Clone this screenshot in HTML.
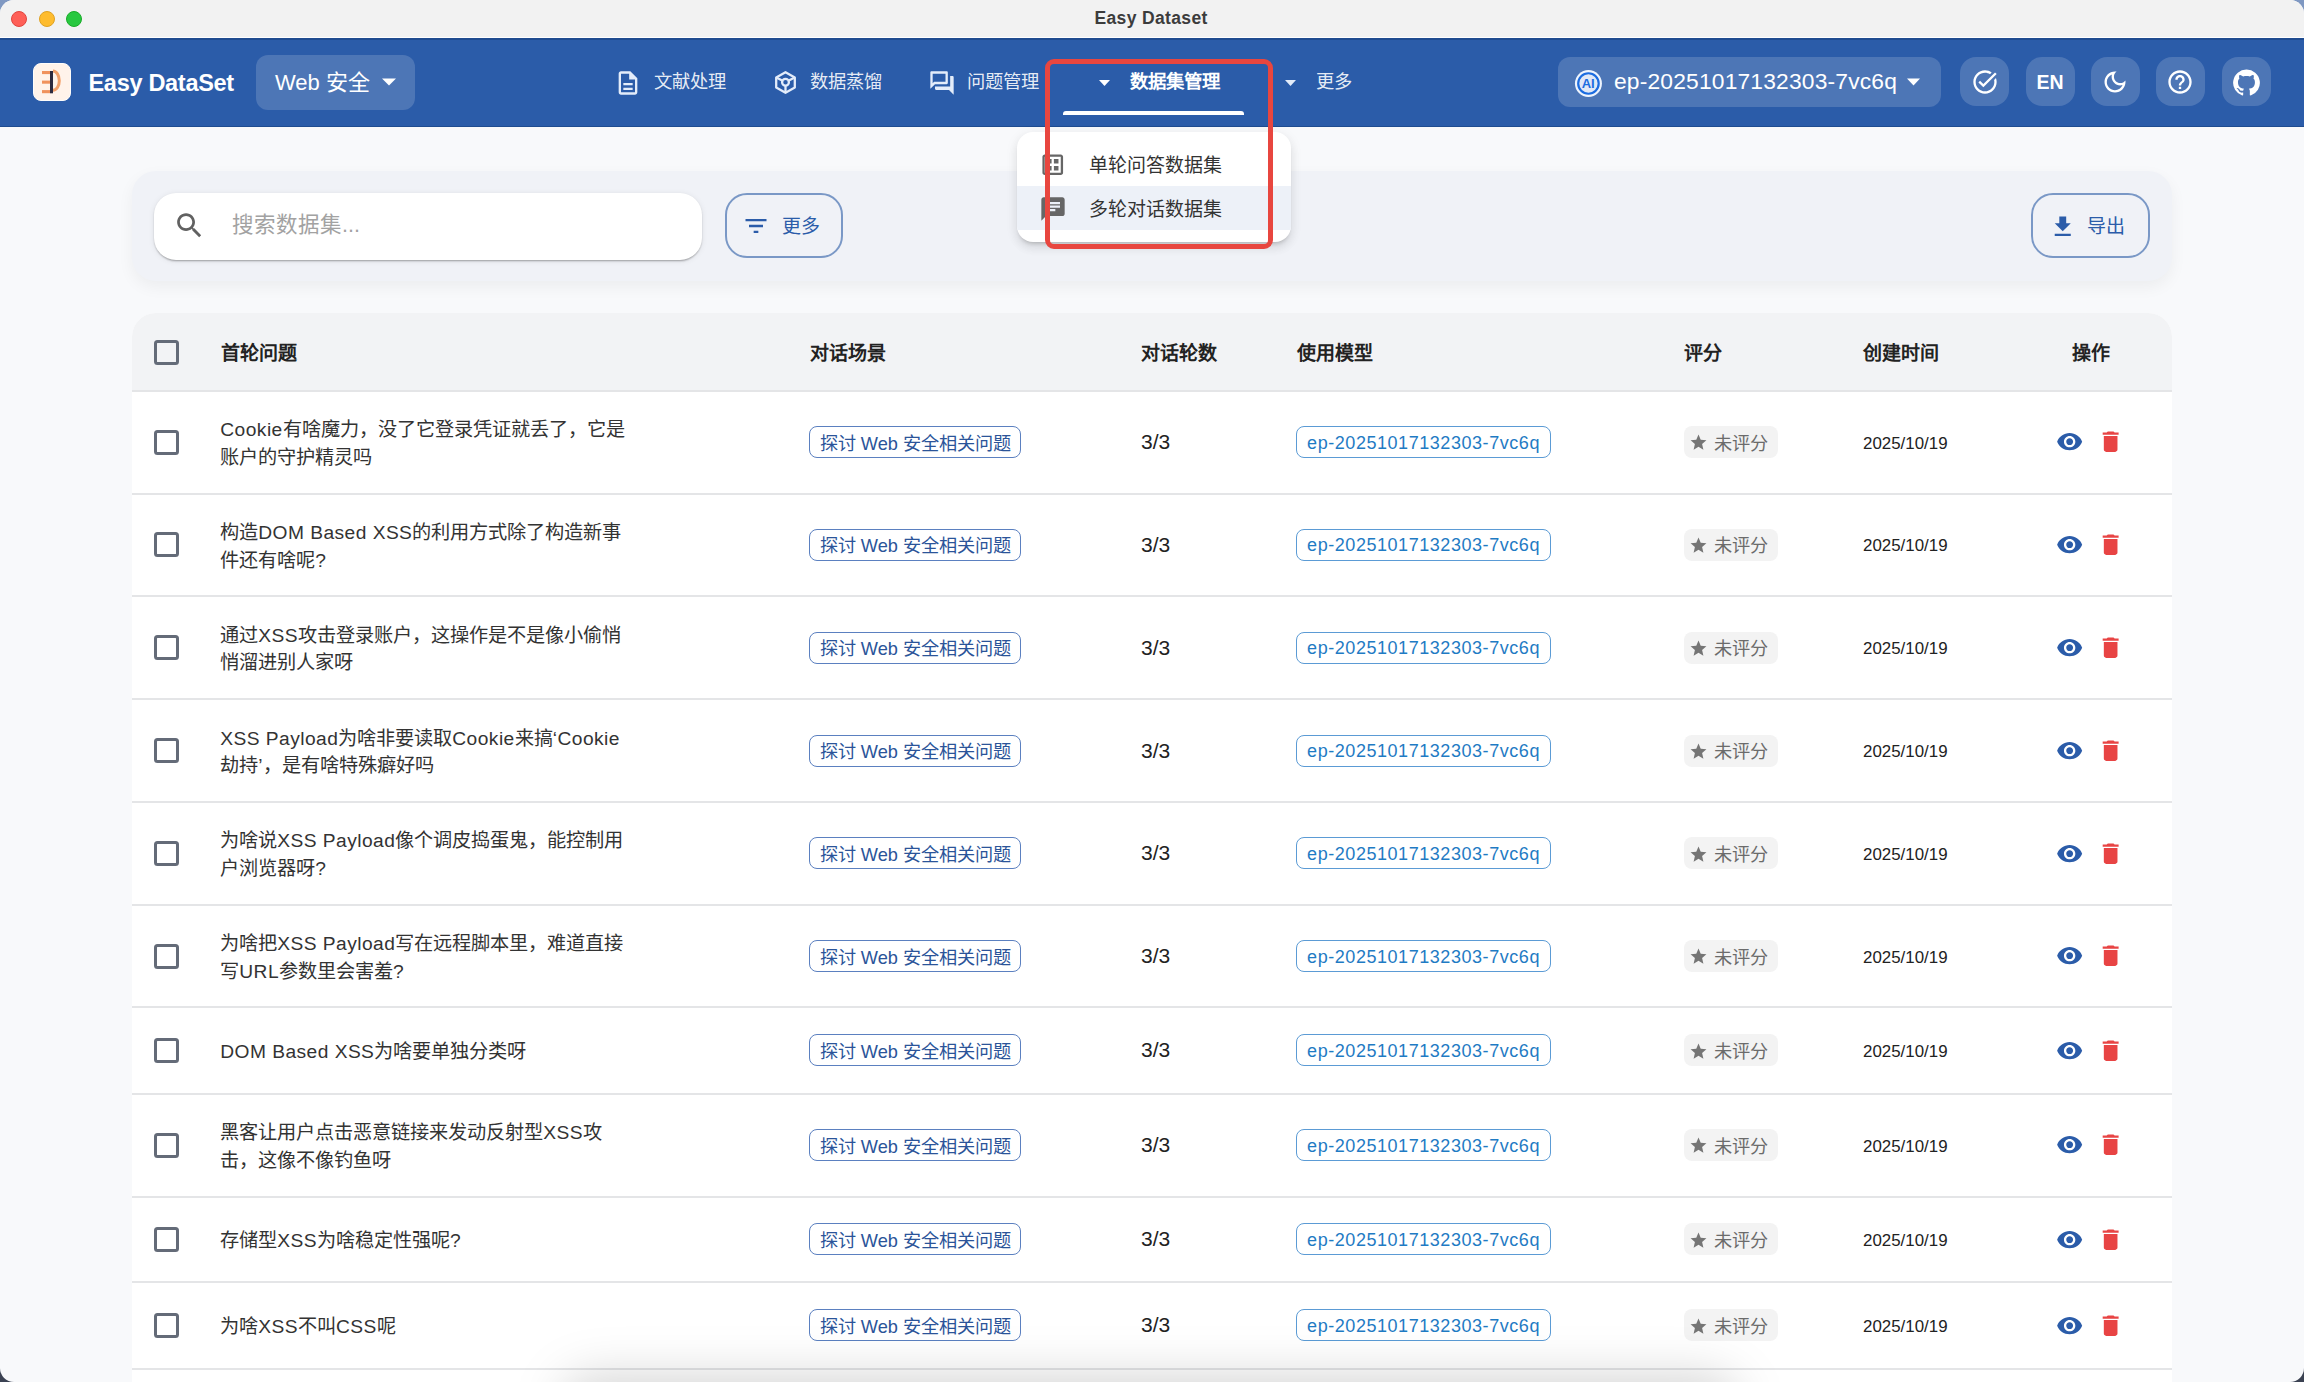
<!DOCTYPE html>
<html lang="zh-CN">
<head>
<meta charset="utf-8">
<style>
*{box-sizing:border-box;margin:0;padding:0}
html,body{width:2304px;height:1382px;overflow:hidden;background:linear-gradient(#7f98c2 0,#7f98c2 60px,#3b4252 1300px)}
body{font-family:"Liberation Sans",sans-serif;position:relative}
.win{position:absolute;left:0;top:0;width:2304px;height:1382px;background:#f8f9fb;border-radius:14px;overflow:hidden}
.abs{position:absolute}
.t{position:absolute;white-space:nowrap;line-height:1}
/* title bar */
.titlebar{position:absolute;left:0;top:0;width:2304px;height:38px;background:#f2f2f2;border-bottom:1px solid #fff}
.tl{position:absolute;top:11px;width:16px;height:16px;border-radius:50%}
/* nav */
.nav{position:absolute;left:0;top:38px;width:2304px;height:89px;background:#2b5ca9}
.pill{position:absolute;background:rgba(255,255,255,0.16);border-radius:12px}
.navt{color:rgba(255,255,255,0.9);font-size:18.3px}
.tri{position:absolute;width:0;height:0;border-left:7px solid transparent;border-right:7px solid transparent;border-top:7px solid #fff}
.tri.s{border-left-width:5.5px;border-right-width:5.5px;border-top-width:6px}
.ibtn{position:absolute;top:57px;width:49px;height:49px;border-radius:16px;background:rgba(255,255,255,0.16)}
/* panel */
.panel{position:absolute;left:132px;top:171px;width:2040px;height:110px;background:#f0f2f7;border-radius:24px;box-shadow:0 6px 16px rgba(0,0,0,0.05)}
.obtn{position:absolute;border:2px solid #7a98c6;border-radius:22px}
/* table */
.th{position:absolute;font-size:19px;font-weight:bold;color:#222;line-height:20px;white-space:nowrap}
.cb{position:absolute;width:25px;height:25px;border:3px solid #646b78;border-radius:3.5px}
.q{position:absolute;font-size:19.2px;line-height:27.7px;color:#333;white-space:nowrap}
.l{letter-spacing:0.45px}
.chip{position:absolute;height:32px;border-radius:8px;white-space:nowrap;line-height:28px}
.c1{border:1.6px solid #5b80c0;color:#2b5499;font-size:18.2px;font-weight:500;padding-left:10px;padding-top:2.5px}
.c2{border:1.6px solid #5b9bd5;color:#1f7bc4;font-size:18px;padding-left:10px;letter-spacing:0.55px;padding-top:1.5px}
.c3{background:#f3f3f3;color:#6b6b6b;font-size:18.2px;padding-left:30px;padding-top:3.5px}
.rt{font-size:21px;color:#222}
.dt{font-size:16.9px;color:#222}
</style>
</head>
<body>
<div class="win">
  <div class="titlebar">
    <div class="tl" style="left:11px;background:#fe5f57;border:1px solid #e0443e"></div>
    <div class="tl" style="left:38.5px;background:#febc2e;border:1px solid #dea123"></div>
    <div class="tl" style="left:66px;background:#28c840;border:1px solid #1aab29"></div>
    <div class="t" style="left:1094.5px;top:9.8px;font-size:17.5px;font-weight:bold;color:#3c3c3c;letter-spacing:0.35px">Easy Dataset</div>
  </div>
  <div class="nav"><div class="abs" style="left:0;top:0;width:2304px;height:1.5px;background:#1f4c90"></div><div class="abs" style="left:0;top:87.8px;width:2304px;height:1.2px;background:#1f4c90"></div>
    <div class="abs" style="left:33px;top:25px;width:38.3px;height:38.3px;border-radius:8px;background:#fff3ea;border:1.5px solid #fffdfb">
      <svg width="38" height="38" viewBox="0 0 38 38" style="position:absolute;left:-1.5px;top:-1.5px">
        <rect x="9" y="8" width="8" height="3.1" fill="#f0925c"/>
        <rect x="9" y="17.6" width="8" height="3.1" fill="#f0925c"/>
        <rect x="9" y="27.1" width="8" height="3.1" fill="#f0925c"/>
        <path d="M20 8.1 A6.3 9.6 0 0 1 20 27.3" fill="none" stroke="#f2a06a" stroke-width="3"/>
        <rect x="17" y="8" width="3" height="22.3" fill="#2d2a3e"/>
      </svg>
    </div>
    <div class="t" style="left:88.5px;top:34px;font-size:23.5px;font-weight:bold;color:#fff;letter-spacing:-0.3px">Easy DataSet</div>
    <div class="pill" style="left:256px;top:17px;width:159px;height:54.5px"></div>
    <div class="t" style="left:275px;top:34px;font-size:22px;color:#fff">Web 安全</div>
    <svg class="abs" style="left:382px;top:40px" width="14" height="8" viewBox="0 0 14 8"><path d="M0 0.5h14L7 7.5z" fill="#fff"/></svg>

    <svg class="abs" style="left:614.3px;top:30.5px" width="28" height="28" viewBox="0 0 24 24"><path fill="#e3ecfa" d="M8 16h8v2H8zm0-4h8v2H8zm6-10H6c-1.1 0-2 .9-2 2v16c0 1.1.89 2 1.99 2H18c1.1 0 2-.9 2-2V8zm4 18H6V4h7v5h5z"/></svg>
    <div class="t navt" style="left:654px;top:35px">文献处理</div>
    <svg class="abs" style="left:772px;top:30.5px" width="26" height="26" viewBox="0 0 26 26"><g fill="none" stroke="#e3ecfa" stroke-width="2.3" stroke-linejoin="round"><path d="M13.5 3.2 L22.8 8.4 V18.6 L13.5 23.8 L4.2 18.6 V8.4 Z"/><circle cx="13.5" cy="13.2" r="3.4"/><path d="M4.8 8.8 L10.6 11.8 M22.2 8.8 L16.4 11.8 M13.5 16.6 V23.5"/></g></svg>
    <div class="t navt" style="left:810px;top:35px">数据蒸馏</div>
    <svg class="abs" style="left:927.7px;top:30.5px" width="28" height="28" viewBox="0 0 24 24"><path fill="#e3ecfa" d="M15 4v7H5.17l-.59.59-.58.58V4zm1-2H3c-.55 0-1 .45-1 1v14l4-4h10c.55 0 1-.45 1-1V3c0-.55-.45-1-1-1m5 4h-2v9H6v2c0 .55.45 1 1 1h11l4 4V7c0-.55-.45-1-1-1"/></svg>
    <div class="t navt" style="left:967px;top:35px">问题管理</div>
    <svg class="abs" style="left:1098.5px;top:42px" width="11" height="6" viewBox="0 0 11 6"><path d="M0 0h11L5.5 6z" fill="#fff"/></svg>
    <div class="t" style="left:1129.5px;top:35px;font-size:18.4px;font-weight:bold;color:#fff">数据集管理</div>
    <div class="abs" style="left:1063px;top:73px;width:181px;height:4px;background:#fff;border-radius:3px 3px 0 0"></div>
    <svg class="abs" style="left:1285px;top:42px" width="11" height="6" viewBox="0 0 11 6"><path d="M0 0h11L5.5 6z" fill="#e3ecfa"/></svg>
    <div class="t navt" style="left:1316px;top:35px">更多</div>

    <div class="pill" style="left:1558px;top:19px;width:383px;height:50px"></div>
    <svg class="abs" style="left:1574px;top:31px" width="29" height="29" viewBox="0 0 29 29"><circle cx="14.45" cy="14.5" r="13.5" fill="#eef4fd"/><circle cx="14.45" cy="14.5" r="10.25" fill="#e0e8f6" stroke="#1b6ce0" stroke-width="2.2"/><text x="14.2" y="19.3" text-anchor="middle" font-family="Liberation Sans" font-weight="bold" font-size="13" fill="#1b6ce0">AI</text></svg>
    <div class="t" style="left:1614px;top:32.3px;font-size:22.8px;color:#fff;letter-spacing:0.18px">ep-20251017132303-7vc6q</div>
    <svg class="abs" style="left:1906.5px;top:40px" width="13" height="8" viewBox="0 0 13 8"><path d="M0 0.5h13L6.5 7.5z" fill="#fff"/></svg>

    <div class="ibtn" style="left:1960px;top:19px"></div>
    <div class="ibtn" style="left:2025.5px;top:19px"></div>
    <div class="ibtn" style="left:2090.5px;top:19px"></div>
    <div class="ibtn" style="left:2156px;top:19px"></div>
    <div class="ibtn" style="left:2221.5px;top:19px"></div>
    <svg class="abs" style="left:1970.5px;top:29.5px" width="28" height="28" viewBox="0 0 24 24"><path fill="#fff" d="M22 5.18 10.59 16.6l-4.24-4.24 1.41-1.41 2.83 2.83 10-10zm-2.21 5.04c.13.57.21 1.17.21 1.78 0 4.42-3.58 8-8 8s-8-3.58-8-8 3.58-8 8-8c1.58 0 3.04.46 4.28 1.25l1.44-1.44C16.1 2.67 14.13 2 12 2 6.48 2 2 6.48 2 12s4.48 10 10 10 10-4.48 10-10c0-1.19-.22-2.33-.6-3.39z"/></svg>
    <div class="t" style="left:2036.5px;top:35px;font-size:19.5px;font-weight:bold;color:#fff">EN</div>
    <svg class="abs" style="left:2101px;top:29.5px" width="28" height="28" viewBox="0 0 24 24"><path fill="#fff" d="M9.37 5.51c-.18.64-.27 1.31-.27 1.99 0 4.08 3.32 7.4 7.4 7.4.68 0 1.35-.09 1.99-.27C17.45 17.19 14.93 19 12 19c-3.86 0-7-3.14-7-7 0-2.93 1.81-5.45 4.37-6.49M12 3c-4.97 0-9 4.03-9 9s4.03 9 9 9 9-4.03 9-9c0-.46-.04-.92-.1-1.36-.98 1.37-2.58 2.26-4.4 2.26-2.98 0-5.4-2.42-5.4-5.4 0-1.81.89-3.42 2.26-4.4-.44-.06-.9-.1-1.36-.1"/></svg>
    <svg class="abs" style="left:2166px;top:29.5px" width="28" height="28" viewBox="0 0 24 24"><path fill="#fff" d="M11 18h2v-2h-2zm1-16C6.48 2 2 6.48 2 12s4.48 10 10 10 10-4.48 10-10S17.52 2 12 2m0 18c-4.41 0-8-3.59-8-8s3.59-8 8-8 8 3.59 8 8-3.59 8-8 8m0-14c-2.21 0-4 1.79-4 4h2c0-1.1.9-2 2-2s2 .9 2 2c0 2-3 1.75-3 5h2c0-2.25 3-2.5 3-5 0-2.210-1.79-4-4-4"/></svg>
    <svg class="abs" style="left:2232px;top:29.5px" width="29" height="29" viewBox="0 0 24 24"><path fill="#fff" d="M12 1.27a11 11 0 00-3.48 21.46c.55.09.73-.28.73-.55v-1.84c-3.03.64-3.67-1.46-3.670-1.46-.55-1.29-1.28-1.65-1.28-1.65-.92-.65.1-.65.1-.65 1.1 0 1.73 1.1 1.73 1.1.92 1.65 2.570 1.2 3.21.92a2 2 0 01.64-1.47c-2.47-.27-5.04-1.19-5.04-5.5 0-1.1.46-2.1 1.2-2.84a3.76 3.76 0 010-2.93s.91-.28 3.11 1.1c1.8-.49 3.7-.49 5.5 0 2.1-1.38 3.02-1.1 3.02-1.1a3.76 3.76 0 010 2.930c.83.74 1.2 1.74 1.2 2.94 0 4.21-2.57 5.13-5.04 5.4.45.37.82.92.82 2.02v3.03c0 .27.1.64.73.55A11 11 0 0012 1.27"/></svg>
  </div>












  <div class="panel"></div>
  <div class="abs" style="left:154px;top:193.2px;width:548px;height:66.4px;background:#fff;border-radius:22px;box-shadow:0 2px 2px -1px rgba(0,0,0,0.22),0 1px 2px 0 rgba(0,0,0,0.12),0 1px 6px 0 rgba(0,0,0,0.08)"></div>
  <svg class="abs" style="left:173.2px;top:209.3px" width="33" height="33" viewBox="0 0 24 24"><path fill="#616161" d="M15.5 14h-.79l-.28-.27C15.41 12.59 16 11.11 16 9.5 16 5.91 13.09 3 9.5 3S3 5.91 3 9.5 5.91 16 9.5 16c1.61 0 3.09-.59 4.23-1.57l.27.28v.79l5 4.99L20.49 19zm-6 0C7.01 14 5 11.99 5 9.5S7.01 5 9.5 5 14 7.01 14 9.5 11.99 14 9.5 14"/></svg>
  <div class="t" style="left:232px;top:215px;font-size:21.5px;color:#a2a2a2">搜索数据集...</div>
  <div class="obtn" style="left:724.6px;top:193.4px;width:118.4px;height:65px"></div>
  <svg class="abs" style="left:742.3px;top:211.9px" width="28" height="28" viewBox="0 0 24 24"><path fill="#2b5ca9" d="M10 18h4v-2h-4zM3 6v2h18V6zm3 7h12v-2H6z"/></svg>
  <div class="t" style="left:782.3px;top:217px;font-size:19px;font-weight:500;color:#2b5ca9">更多</div>
  <div class="obtn" style="left:2030.7px;top:193.2px;width:119px;height:65.2px"></div>
  <svg class="abs" style="left:2048.8px;top:212.6px" width="27.5" height="27.5" viewBox="0 0 24 24"><path fill="#2b5ca9" d="M5 20h14v-2H5zM19 9h-4V3H9v6H5l7 7z"/></svg>
  <div class="t" style="left:2087px;top:217px;font-size:19px;font-weight:500;color:#2b5ca9">导出</div>
<div class="abs" style="left:132px;top:313px;width:2040px;height:1100px;background:#fff;border-radius:24px 24px 0 0;overflow:hidden">
<div class="abs" style="left:0;top:0;width:2040px;height:76.60px;background:#f2f3f5"></div>
</div>
<div class="abs" style="left:132px;top:389.60px;width:2040px;height:2px;background:#e4e5e7"></div>
<div class="abs" style="left:132px;top:492.50px;width:2040px;height:2px;background:#e4e5e7"></div>
<div class="abs" style="left:132px;top:595.30px;width:2040px;height:2px;background:#e4e5e7"></div>
<div class="abs" style="left:132px;top:698.10px;width:2040px;height:2px;background:#e4e5e7"></div>
<div class="abs" style="left:132px;top:800.90px;width:2040px;height:2px;background:#e4e5e7"></div>
<div class="abs" style="left:132px;top:903.70px;width:2040px;height:2px;background:#e4e5e7"></div>
<div class="abs" style="left:132px;top:1006.30px;width:2040px;height:2px;background:#e4e5e7"></div>
<div class="abs" style="left:132px;top:1092.50px;width:2040px;height:2px;background:#e4e5e7"></div>
<div class="abs" style="left:132px;top:1195.50px;width:2040px;height:2px;background:#e4e5e7"></div>
<div class="abs" style="left:132px;top:1281.20px;width:2040px;height:2px;background:#e4e5e7"></div>
<div class="abs" style="left:132px;top:1367.50px;width:2040px;height:2px;background:#e4e5e7"></div>
<div class="abs" style="left:132px;top:1370px;width:2040px;height:20px;background:#fff"></div>
<div class="cb" style="left:154px;top:339.60px"></div>
<div class="th" style="left:221.25px;top:343.60px">首轮问题</div>
<div class="th" style="left:809.50px;top:343.60px">对话场景</div>
<div class="th" style="left:1141.00px;top:343.60px">对话轮数</div>
<div class="th" style="left:1296.50px;top:343.60px">使用模型</div>
<div class="th" style="left:1684.00px;top:343.60px">评分</div>
<div class="th" style="left:1862.80px;top:343.60px">创建时间</div>
<div class="th" style="left:2071.90px;top:343.60px">操作</div>
<div class="cb" style="left:154px;top:429.55px"></div>
<div class="q" style="left:220.3px;top:416.05px"><span class="l">Cookie</span>有啥魔力，没了它登录凭证就丢了，它是<br>账户的守护精灵吗</div>
<div class="chip c1" style="left:808.75px;top:426.05px;width:211.75px">探讨 Web 安全相关问题</div>
<div class="t rt" style="left:1141px;top:431.05px">3/3</div>
<div class="chip c2" style="left:1296.1px;top:426.05px;width:254.9px">ep-20251017132303-7vc6q</div>
<div class="chip c3" style="left:1683.5px;top:426.05px;width:94.8px"><svg style="position:absolute;left:5.8px;top:7.3px" width="19" height="19" viewBox="0 0 24 24"><path fill="#757575" d="M12 17.27 18.18 21l-1.64-7.03L22 9.24l-7.19-.61L12 2 9.19 8.63 2 9.24l5.46 4.73L5.82 21z"/></svg><span>未评分</span></div>
<div class="t dt" style="left:1863px;top:435.55px">2025/10/19</div>
<svg class="abs" style="left:2055.9px;top:428.40px" width="27.3" height="27.3" viewBox="0 0 24 24"><path fill="#2b5ca9" d="M12 4.5C7 4.5 2.73 7.61 1 12c1.73 4.39 6 7.5 11 7.5s9.270-3.11 11-7.5c-1.73-4.39-6-7.5-11-7.5M12 17c-2.76 0-5-2.24-5-5s2.24-5 5-5 5 2.24 5 5-2.24 5-5 5m0-8c-1.66 0-3 1.34-3 3s1.34 3 3 3 3-1.34 3-3-1.34-3-3-3"/></svg>
<svg class="abs" style="left:2097.1px;top:428.40px" width="27.3" height="27.3" viewBox="0 0 24 24"><path fill="#e84444" d="M6 19c0 1.1.9 2 2 2h8c1.1 0 2-.9 2-2V7H6zM19 4h-3.5l-1-1h-5l-1 1H5v2h14z"/></svg>
<div class="cb" style="left:154px;top:532.40px"></div>
<div class="q" style="left:220.3px;top:518.90px">构造<span class="l">DOM Based XSS</span>的利用方式除了构造新事<br>件还有啥呢?</div>
<div class="chip c1" style="left:808.75px;top:528.90px;width:211.75px">探讨 Web 安全相关问题</div>
<div class="t rt" style="left:1141px;top:533.90px">3/3</div>
<div class="chip c2" style="left:1296.1px;top:528.90px;width:254.9px">ep-20251017132303-7vc6q</div>
<div class="chip c3" style="left:1683.5px;top:528.90px;width:94.8px"><svg style="position:absolute;left:5.8px;top:7.3px" width="19" height="19" viewBox="0 0 24 24"><path fill="#757575" d="M12 17.27 18.18 21l-1.64-7.03L22 9.24l-7.19-.61L12 2 9.19 8.63 2 9.24l5.46 4.73L5.82 21z"/></svg><span>未评分</span></div>
<div class="t dt" style="left:1863px;top:538.40px">2025/10/19</div>
<svg class="abs" style="left:2055.9px;top:531.25px" width="27.3" height="27.3" viewBox="0 0 24 24"><path fill="#2b5ca9" d="M12 4.5C7 4.5 2.73 7.61 1 12c1.73 4.39 6 7.5 11 7.5s9.270-3.11 11-7.5c-1.73-4.39-6-7.5-11-7.5M12 17c-2.76 0-5-2.24-5-5s2.24-5 5-5 5 2.24 5 5-2.24 5-5 5m0-8c-1.66 0-3 1.34-3 3s1.34 3 3 3 3-1.34 3-3-1.34-3-3-3"/></svg>
<svg class="abs" style="left:2097.1px;top:531.25px" width="27.3" height="27.3" viewBox="0 0 24 24"><path fill="#e84444" d="M6 19c0 1.1.9 2 2 2h8c1.1 0 2-.9 2-2V7H6zM19 4h-3.5l-1-1h-5l-1 1H5v2h14z"/></svg>
<div class="cb" style="left:154px;top:635.20px"></div>
<div class="q" style="left:220.3px;top:621.70px">通过<span class="l">XSS</span>攻击登录账户，这操作是不是像小偷悄<br>悄溜进别人家呀</div>
<div class="chip c1" style="left:808.75px;top:631.70px;width:211.75px">探讨 Web 安全相关问题</div>
<div class="t rt" style="left:1141px;top:636.70px">3/3</div>
<div class="chip c2" style="left:1296.1px;top:631.70px;width:254.9px">ep-20251017132303-7vc6q</div>
<div class="chip c3" style="left:1683.5px;top:631.70px;width:94.8px"><svg style="position:absolute;left:5.8px;top:7.3px" width="19" height="19" viewBox="0 0 24 24"><path fill="#757575" d="M12 17.27 18.18 21l-1.64-7.03L22 9.24l-7.19-.61L12 2 9.19 8.63 2 9.24l5.46 4.73L5.82 21z"/></svg><span>未评分</span></div>
<div class="t dt" style="left:1863px;top:641.20px">2025/10/19</div>
<svg class="abs" style="left:2055.9px;top:634.05px" width="27.3" height="27.3" viewBox="0 0 24 24"><path fill="#2b5ca9" d="M12 4.5C7 4.5 2.73 7.61 1 12c1.73 4.39 6 7.5 11 7.5s9.270-3.11 11-7.5c-1.73-4.39-6-7.5-11-7.5M12 17c-2.76 0-5-2.24-5-5s2.24-5 5-5 5 2.24 5 5-2.24 5-5 5m0-8c-1.66 0-3 1.34-3 3s1.34 3 3 3 3-1.34 3-3-1.34-3-3-3"/></svg>
<svg class="abs" style="left:2097.1px;top:634.05px" width="27.3" height="27.3" viewBox="0 0 24 24"><path fill="#e84444" d="M6 19c0 1.1.9 2 2 2h8c1.1 0 2-.9 2-2V7H6zM19 4h-3.5l-1-1h-5l-1 1H5v2h14z"/></svg>
<div class="cb" style="left:154px;top:738.00px"></div>
<div class="q" style="left:220.3px;top:724.50px"><span class="l">XSS Payload</span>为啥非要读取<span class="l">Cookie</span>来搞<span class="l">‘Cookie</span><br>劫持’，是有啥特殊癖好吗</div>
<div class="chip c1" style="left:808.75px;top:734.50px;width:211.75px">探讨 Web 安全相关问题</div>
<div class="t rt" style="left:1141px;top:739.50px">3/3</div>
<div class="chip c2" style="left:1296.1px;top:734.50px;width:254.9px">ep-20251017132303-7vc6q</div>
<div class="chip c3" style="left:1683.5px;top:734.50px;width:94.8px"><svg style="position:absolute;left:5.8px;top:7.3px" width="19" height="19" viewBox="0 0 24 24"><path fill="#757575" d="M12 17.27 18.18 21l-1.64-7.03L22 9.24l-7.19-.61L12 2 9.19 8.63 2 9.24l5.46 4.73L5.82 21z"/></svg><span>未评分</span></div>
<div class="t dt" style="left:1863px;top:744.00px">2025/10/19</div>
<svg class="abs" style="left:2055.9px;top:736.85px" width="27.3" height="27.3" viewBox="0 0 24 24"><path fill="#2b5ca9" d="M12 4.5C7 4.5 2.73 7.61 1 12c1.73 4.39 6 7.5 11 7.5s9.270-3.11 11-7.5c-1.73-4.39-6-7.5-11-7.5M12 17c-2.76 0-5-2.24-5-5s2.24-5 5-5 5 2.24 5 5-2.24 5-5 5m0-8c-1.66 0-3 1.34-3 3s1.34 3 3 3 3-1.34 3-3-1.34-3-3-3"/></svg>
<svg class="abs" style="left:2097.1px;top:736.85px" width="27.3" height="27.3" viewBox="0 0 24 24"><path fill="#e84444" d="M6 19c0 1.1.9 2 2 2h8c1.1 0 2-.9 2-2V7H6zM19 4h-3.5l-1-1h-5l-1 1H5v2h14z"/></svg>
<div class="cb" style="left:154px;top:840.80px"></div>
<div class="q" style="left:220.3px;top:827.30px">为啥说<span class="l">XSS Payload</span>像个调皮捣蛋鬼，能控制用<br>户浏览器呀?</div>
<div class="chip c1" style="left:808.75px;top:837.30px;width:211.75px">探讨 Web 安全相关问题</div>
<div class="t rt" style="left:1141px;top:842.30px">3/3</div>
<div class="chip c2" style="left:1296.1px;top:837.30px;width:254.9px">ep-20251017132303-7vc6q</div>
<div class="chip c3" style="left:1683.5px;top:837.30px;width:94.8px"><svg style="position:absolute;left:5.8px;top:7.3px" width="19" height="19" viewBox="0 0 24 24"><path fill="#757575" d="M12 17.27 18.18 21l-1.64-7.03L22 9.24l-7.19-.61L12 2 9.19 8.63 2 9.24l5.46 4.73L5.82 21z"/></svg><span>未评分</span></div>
<div class="t dt" style="left:1863px;top:846.80px">2025/10/19</div>
<svg class="abs" style="left:2055.9px;top:839.65px" width="27.3" height="27.3" viewBox="0 0 24 24"><path fill="#2b5ca9" d="M12 4.5C7 4.5 2.73 7.61 1 12c1.73 4.39 6 7.5 11 7.5s9.270-3.11 11-7.5c-1.73-4.39-6-7.5-11-7.5M12 17c-2.76 0-5-2.24-5-5s2.24-5 5-5 5 2.24 5 5-2.24 5-5 5m0-8c-1.66 0-3 1.34-3 3s1.34 3 3 3 3-1.34 3-3-1.34-3-3-3"/></svg>
<svg class="abs" style="left:2097.1px;top:839.65px" width="27.3" height="27.3" viewBox="0 0 24 24"><path fill="#e84444" d="M6 19c0 1.1.9 2 2 2h8c1.1 0 2-.9 2-2V7H6zM19 4h-3.5l-1-1h-5l-1 1H5v2h14z"/></svg>
<div class="cb" style="left:154px;top:943.50px"></div>
<div class="q" style="left:220.3px;top:930.00px">为啥把<span class="l">XSS Payload</span>写在远程脚本里，难道直接<br>写<span class="l">URL</span>参数里会害羞?</div>
<div class="chip c1" style="left:808.75px;top:940.00px;width:211.75px">探讨 Web 安全相关问题</div>
<div class="t rt" style="left:1141px;top:945.00px">3/3</div>
<div class="chip c2" style="left:1296.1px;top:940.00px;width:254.9px">ep-20251017132303-7vc6q</div>
<div class="chip c3" style="left:1683.5px;top:940.00px;width:94.8px"><svg style="position:absolute;left:5.8px;top:7.3px" width="19" height="19" viewBox="0 0 24 24"><path fill="#757575" d="M12 17.27 18.18 21l-1.64-7.03L22 9.24l-7.19-.61L12 2 9.19 8.63 2 9.24l5.46 4.73L5.82 21z"/></svg><span>未评分</span></div>
<div class="t dt" style="left:1863px;top:949.50px">2025/10/19</div>
<svg class="abs" style="left:2055.9px;top:942.35px" width="27.3" height="27.3" viewBox="0 0 24 24"><path fill="#2b5ca9" d="M12 4.5C7 4.5 2.73 7.61 1 12c1.73 4.39 6 7.5 11 7.5s9.270-3.11 11-7.5c-1.73-4.39-6-7.5-11-7.5M12 17c-2.76 0-5-2.24-5-5s2.24-5 5-5 5 2.24 5 5-2.24 5-5 5m0-8c-1.66 0-3 1.34-3 3s1.34 3 3 3 3-1.34 3-3-1.34-3-3-3"/></svg>
<svg class="abs" style="left:2097.1px;top:942.35px" width="27.3" height="27.3" viewBox="0 0 24 24"><path fill="#e84444" d="M6 19c0 1.1.9 2 2 2h8c1.1 0 2-.9 2-2V7H6zM19 4h-3.5l-1-1h-5l-1 1H5v2h14z"/></svg>
<div class="cb" style="left:154px;top:1037.90px"></div>
<div class="q" style="left:220.3px;top:1038.40px"><span class="l">DOM Based XSS</span>为啥要单独分类呀</div>
<div class="chip c1" style="left:808.75px;top:1034.40px;width:211.75px">探讨 Web 安全相关问题</div>
<div class="t rt" style="left:1141px;top:1039.40px">3/3</div>
<div class="chip c2" style="left:1296.1px;top:1034.40px;width:254.9px">ep-20251017132303-7vc6q</div>
<div class="chip c3" style="left:1683.5px;top:1034.40px;width:94.8px"><svg style="position:absolute;left:5.8px;top:7.3px" width="19" height="19" viewBox="0 0 24 24"><path fill="#757575" d="M12 17.27 18.18 21l-1.64-7.03L22 9.24l-7.19-.61L12 2 9.19 8.63 2 9.24l5.46 4.73L5.82 21z"/></svg><span>未评分</span></div>
<div class="t dt" style="left:1863px;top:1043.90px">2025/10/19</div>
<svg class="abs" style="left:2055.9px;top:1036.75px" width="27.3" height="27.3" viewBox="0 0 24 24"><path fill="#2b5ca9" d="M12 4.5C7 4.5 2.73 7.61 1 12c1.73 4.39 6 7.5 11 7.5s9.270-3.11 11-7.5c-1.73-4.39-6-7.5-11-7.5M12 17c-2.76 0-5-2.24-5-5s2.24-5 5-5 5 2.24 5 5-2.24 5-5 5m0-8c-1.66 0-3 1.34-3 3s1.34 3 3 3 3-1.34 3-3-1.34-3-3-3"/></svg>
<svg class="abs" style="left:2097.1px;top:1036.75px" width="27.3" height="27.3" viewBox="0 0 24 24"><path fill="#e84444" d="M6 19c0 1.1.9 2 2 2h8c1.1 0 2-.9 2-2V7H6zM19 4h-3.5l-1-1h-5l-1 1H5v2h14z"/></svg>
<div class="cb" style="left:154px;top:1132.50px"></div>
<div class="q" style="left:220.3px;top:1119.00px">黑客让用户点击恶意链接来发动反射型<span class="l">XSS</span>攻<br>击，这像不像钓鱼呀</div>
<div class="chip c1" style="left:808.75px;top:1129.00px;width:211.75px">探讨 Web 安全相关问题</div>
<div class="t rt" style="left:1141px;top:1134.00px">3/3</div>
<div class="chip c2" style="left:1296.1px;top:1129.00px;width:254.9px">ep-20251017132303-7vc6q</div>
<div class="chip c3" style="left:1683.5px;top:1129.00px;width:94.8px"><svg style="position:absolute;left:5.8px;top:7.3px" width="19" height="19" viewBox="0 0 24 24"><path fill="#757575" d="M12 17.27 18.18 21l-1.64-7.03L22 9.24l-7.19-.61L12 2 9.19 8.63 2 9.24l5.46 4.73L5.82 21z"/></svg><span>未评分</span></div>
<div class="t dt" style="left:1863px;top:1138.50px">2025/10/19</div>
<svg class="abs" style="left:2055.9px;top:1131.35px" width="27.3" height="27.3" viewBox="0 0 24 24"><path fill="#2b5ca9" d="M12 4.5C7 4.5 2.73 7.61 1 12c1.73 4.39 6 7.5 11 7.5s9.270-3.11 11-7.5c-1.73-4.39-6-7.5-11-7.5M12 17c-2.76 0-5-2.24-5-5s2.24-5 5-5 5 2.24 5 5-2.24 5-5 5m0-8c-1.66 0-3 1.34-3 3s1.34 3 3 3 3-1.34 3-3-1.34-3-3-3"/></svg>
<svg class="abs" style="left:2097.1px;top:1131.35px" width="27.3" height="27.3" viewBox="0 0 24 24"><path fill="#e84444" d="M6 19c0 1.1.9 2 2 2h8c1.1 0 2-.9 2-2V7H6zM19 4h-3.5l-1-1h-5l-1 1H5v2h14z"/></svg>
<div class="cb" style="left:154px;top:1226.85px"></div>
<div class="q" style="left:220.3px;top:1227.35px">存储型<span class="l">XSS</span>为啥稳定性强呢?</div>
<div class="chip c1" style="left:808.75px;top:1223.35px;width:211.75px">探讨 Web 安全相关问题</div>
<div class="t rt" style="left:1141px;top:1228.35px">3/3</div>
<div class="chip c2" style="left:1296.1px;top:1223.35px;width:254.9px">ep-20251017132303-7vc6q</div>
<div class="chip c3" style="left:1683.5px;top:1223.35px;width:94.8px"><svg style="position:absolute;left:5.8px;top:7.3px" width="19" height="19" viewBox="0 0 24 24"><path fill="#757575" d="M12 17.27 18.18 21l-1.64-7.03L22 9.24l-7.19-.61L12 2 9.19 8.63 2 9.24l5.46 4.73L5.82 21z"/></svg><span>未评分</span></div>
<div class="t dt" style="left:1863px;top:1232.85px">2025/10/19</div>
<svg class="abs" style="left:2055.9px;top:1225.70px" width="27.3" height="27.3" viewBox="0 0 24 24"><path fill="#2b5ca9" d="M12 4.5C7 4.5 2.73 7.61 1 12c1.73 4.39 6 7.5 11 7.5s9.270-3.11 11-7.5c-1.73-4.39-6-7.5-11-7.5M12 17c-2.76 0-5-2.24-5-5s2.24-5 5-5 5 2.24 5 5-2.24 5-5 5m0-8c-1.66 0-3 1.34-3 3s1.34 3 3 3 3-1.34 3-3-1.34-3-3-3"/></svg>
<svg class="abs" style="left:2097.1px;top:1225.70px" width="27.3" height="27.3" viewBox="0 0 24 24"><path fill="#e84444" d="M6 19c0 1.1.9 2 2 2h8c1.1 0 2-.9 2-2V7H6zM19 4h-3.5l-1-1h-5l-1 1H5v2h14z"/></svg>
<div class="cb" style="left:154px;top:1312.85px"></div>
<div class="q" style="left:220.3px;top:1313.35px">为啥<span class="l">XSS</span>不叫<span class="l">CSS</span>呢</div>
<div class="chip c1" style="left:808.75px;top:1309.35px;width:211.75px">探讨 Web 安全相关问题</div>
<div class="t rt" style="left:1141px;top:1314.35px">3/3</div>
<div class="chip c2" style="left:1296.1px;top:1309.35px;width:254.9px">ep-20251017132303-7vc6q</div>
<div class="chip c3" style="left:1683.5px;top:1309.35px;width:94.8px"><svg style="position:absolute;left:5.8px;top:7.3px" width="19" height="19" viewBox="0 0 24 24"><path fill="#757575" d="M12 17.27 18.18 21l-1.64-7.03L22 9.24l-7.19-.61L12 2 9.19 8.63 2 9.24l5.46 4.73L5.82 21z"/></svg><span>未评分</span></div>
<div class="t dt" style="left:1863px;top:1318.85px">2025/10/19</div>
<svg class="abs" style="left:2055.9px;top:1311.70px" width="27.3" height="27.3" viewBox="0 0 24 24"><path fill="#2b5ca9" d="M12 4.5C7 4.5 2.73 7.61 1 12c1.73 4.39 6 7.5 11 7.5s9.270-3.11 11-7.5c-1.73-4.39-6-7.5-11-7.5M12 17c-2.76 0-5-2.24-5-5s2.24-5 5-5 5 2.24 5 5-2.24 5-5 5m0-8c-1.66 0-3 1.34-3 3s1.34 3 3 3 3-1.34 3-3-1.34-3-3-3"/></svg>
<svg class="abs" style="left:2097.1px;top:1311.70px" width="27.3" height="27.3" viewBox="0 0 24 24"><path fill="#e84444" d="M6 19c0 1.1.9 2 2 2h8c1.1 0 2-.9 2-2V7H6zM19 4h-3.5l-1-1h-5l-1 1H5v2h14z"/></svg>
  <div class="abs" style="left:560px;top:1375px;width:1180px;height:70px;border-radius:35px;background:rgba(0,0,0,0.16);filter:blur(24px)"></div>
  <div class="abs" style="left:1017px;top:131.5px;width:273.6px;height:110.3px;background:#fff;border-radius:16px;overflow:hidden;box-shadow:0 4px 4px -3px rgba(0,0,0,0.22),0 6px 10px 1px rgba(0,0,0,0.06),0 3px 12px 2px rgba(0,0,0,0.05)">
    <div class="abs" style="left:0;top:54.5px;width:273.6px;height:43.7px;background:#edf1f8"></div>
  </div>
  <svg class="abs" style="left:1039px;top:150.9px" width="27.5" height="27.5" viewBox="0 0 24 24"><path fill="#666" d="M19 3H5c-1.1 0-2 .9-2 2v14c0 1.1.9 2 2 2h14c1.1 0 2-.9 2-2V5c0-1.1-.9-2-2-2m0 16H5V5h14zM11 7H7v4h4zm0 6H7v4h4zm6-6h-4v4h4zm0 6h-4v4h4z"/></svg>
  <svg class="abs" style="left:1038.7px;top:195px" width="28" height="28" viewBox="0 0 24 24"><path fill="#666" d="M20 2H4c-1.1 0-1.99.9-1.99 2L2 22l4-4h14c1.1 0 2-.9 2-2V4c0-1.1-.9-2-2-2M6 9h12v2H6zm8 5H6v-2h8zm4-6H6V6h12z"/></svg>
  <div class="t" style="left:1088.5px;top:156px;font-size:19px;color:#333">单轮问答数据集</div>
  <div class="t" style="left:1088.5px;top:200px;font-size:19px;color:#333">多轮对话数据集</div>
  <div class="abs" style="left:1045px;top:58.6px;width:228px;height:190.6px;border:5.5px solid #e8463f;border-radius:9px"></div>
</div>
</body>
</html>
